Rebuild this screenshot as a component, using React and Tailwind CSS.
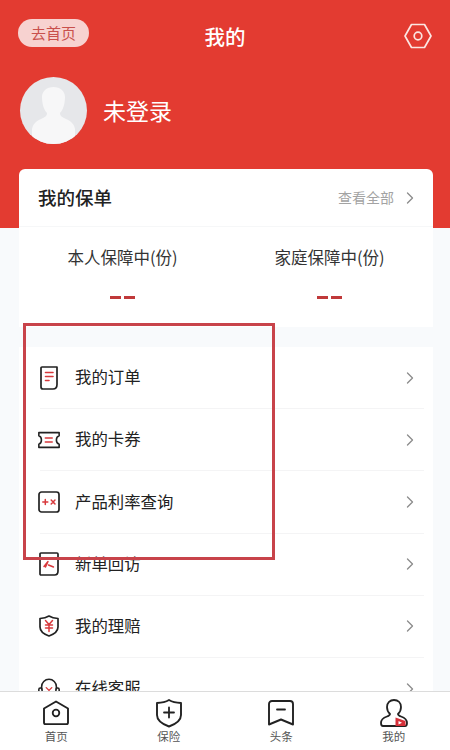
import React from 'react';
import { ChevronRight } from 'lucide-react';

const RED = '#d8393c';

// Menu icons
const OrderIcon = () => (
  <svg width="24" height="26" viewBox="0 0 24 26" fill="none" strokeLinecap="round" strokeLinejoin="round">
    <path d="M5 2h15v17.500c0 2.800-1.600 4.500-4 4.500H6c-1.200 0-2-.8-2-2V3c0-.6.400-1 1-1z" stroke="#222" strokeWidth="1.700" />
    <path d="M8.500 7.500h7.500M8.500 11.500h7.500M8.500 15.500h3.500" stroke={RED} strokeWidth="1.600" />
  </svg>
);

const TicketIcon = () => (
  <svg width="26" height="20" viewBox="0 0 26 20" fill="none" strokeLinecap="round" strokeLinejoin="round">
    <path d="M2 2h22v3.500c-2 .6-3 2.400-3 4.500s1 3.900 3 4.500V18H2v-3.500c1.800-.6 2.800-2.500 2.800-4.500S3.800 6.100 2 5.500z" stroke="#222" strokeWidth="1.700" />
    <path d="M9 7.800h7.500M9 12.200h7.500" stroke={RED} strokeWidth="1.600" />
  </svg>
);

const CalcIcon = () => (
  <svg width="24" height="24" viewBox="0 0 24 24" fill="none" strokeLinecap="round">
    <rect x="2" y="2" width="20" height="20" rx="2.500" stroke="#222" strokeWidth="1.700" />
    <path d="M5.800 12h5M8.300 9.500v5M14.200 10l3.800 4M18 10l-3.800 4" stroke={RED} strokeWidth="1.500" />
  </svg>
);

const VisitIcon = () => (
  <svg width="22" height="26" viewBox="0 0 22 26" fill="none" strokeLinecap="round" strokeLinejoin="round">
    <path d="M3 2h16c.6 0 1 .4 1 1v17c0 2.500-1.500 4-3.500 4H3c-.6 0-1-.4-1-1V3c0-.6.400-1 1-1z" stroke="#222" strokeWidth="1.700" />
    <path d="M6 15.500l4-5-2.500 5.500M10.500 14l5 2" stroke={RED} strokeWidth="1.500" />
  </svg>
);

const ClaimIcon = () => (
  <svg width="22" height="24" viewBox="0 0 22 24" fill="none" strokeLinecap="round" strokeLinejoin="round">
    <path d="M11 2c2.500 1.500 5.500 2.300 9 2.500v8.500c0 4-4 7.200-9 9-5-1.800-9-5-9-9V4.500C5.500 4.300 8.500 3.500 11 2z" stroke="#222" strokeWidth="1.700" />
    <path d="M7.500 6.500L11 10.500l3.500-4M7.500 11h7M7.500 14h7M11 10.500v7" stroke={RED} strokeWidth="1.500" />
  </svg>
);

const ServiceIcon = () => (
  <svg width="26" height="26" viewBox="0 0 26 26" fill="none" strokeLinecap="round" strokeLinejoin="round">
    <path d="M5 13V10.500C5 6 8.500 2.500 13 2.500S21 6 21 10.500V13" stroke="#222" strokeWidth="1.700" />
    <rect x="2" y="12" width="3.500" height="8" rx="1.500" stroke="#222" strokeWidth="1.700" />
    <rect x="20.500" y="12" width="3.500" height="8" rx="1.500" stroke="#222" strokeWidth="1.700" />
    <path d="M10 11.500l3 3 3-3M10 16h6M13 14.500v5" stroke={RED} strokeWidth="1.500" />
  </svg>
);

// Tab bar icons
const HomeTab = () => (
  <svg width="28" height="28" viewBox="0 0 28 28" fill="none" strokeLinejoin="round">
    <path d="M14 2.500L26 9.500v14c0 1-.6 1.600-1.500 1.600h-21C2.600 25.100 2 24.500 2 23.500v-14z" stroke="#222" strokeWidth="1.900" />
    <circle cx="14" cy="14" r="3.300" stroke="#222" strokeWidth="1.800" />
  </svg>
);

const ShieldTab = () => (
  <svg width="28" height="30" viewBox="0 0 28 30" fill="none" strokeLinecap="round" strokeLinejoin="round">
    <path d="M14 2c3 1.800 7 2.800 12 3v12c0 5-5 9-12 11.500C7 26 2 22 2 17V5c5-.2 9-1.200 12-3z" stroke="#222" strokeWidth="1.900" />
    <path d="M9 14.500h10M14 9.500v10" stroke="#222" strokeWidth="1.800" />
  </svg>
);

const BookmarkTab = () => (
  <svg width="28" height="28" viewBox="0 0 28 28" fill="none" strokeLinecap="round" strokeLinejoin="round">
    <path d="M5 2h18c1.800 0 3 1.200 3 3v20.500L14 20.500 2 25.500V5c0-1.800 1.200-3 3-3z" stroke="#222" strokeWidth="1.900" />
    <path d="M10 10.500h8" stroke="#222" strokeWidth="1.800" />
  </svg>
);

const UserTab = () => (
  <svg width="30" height="30" viewBox="0 0 30 30" fill="none" strokeLinecap="round" strokeLinejoin="round">
    <path d="M8 9c0-4.200 3-7 7-7s7 2.800 7 7c0 3-1.300 5.500-3 7 0 1 .8 1.700 3 2.500 3.500 1.200 6 3 6 6.500 0 1.500-.8 3-2 3H4c-1.200 0-2-1.500-2-3 0-3.500 2.500-5.300 6-6.500 2.200-.8 3-1.500 3-2.500-1.700-1.500-3-4-3-7z" stroke="#222" strokeWidth="1.800" />
    <path d="M16.500 19.500l10 3.500v5h-10z" fill="#d6313a" />
    <path d="M19.500 23l3.500 1.800-3.500 1.700z" fill="#fff" />
  </svg>
);

const menuItems = [
  { label: '我的订单', icon: <OrderIcon /> },
  { label: '我的卡券', icon: <TicketIcon /> },
  { label: '产品利率查询', icon: <CalcIcon /> },
  { label: '新单回访', icon: <VisitIcon /> },
  { label: '我的理赔', icon: <ClaimIcon /> },
  { label: '在线客服', icon: <ServiceIcon /> },
];

const tabs = [
  { label: '首页', icon: <HomeTab /> },
  { label: '保险', icon: <ShieldTab /> },
  { label: '头条', icon: <BookmarkTab /> },
  { label: '我的', icon: <UserTab /> },
];

const stats = ['本人保障中(份)', '家庭保障中(份)'];

const App = () => (
  <div className="relative flex flex-col h-[750px] w-[450px] overflow-hidden bg-[#f8fafc] font-['Noto_Sans_CJK_SC','Noto_Sans',sans-serif]">
    <main className="flex-1 overflow-hidden">
      {/* Red header */}
      <header className="h-[228px] bg-[#e33b31] pl-[18px] pr-[17px] pt-[19px]">
        <div className="grid grid-cols-3 items-center h-[34px]">
          <button className="self-start w-[71px] h-[28px] rounded-full bg-[#f7d2d0] text-[#c9504c] text-[15px] leading-[28px] text-center">
            去首页
          </button>
          <h1 className="text-center text-white text-[20.500px] font-medium leading-none pr-[1px]">我的</h1>
          <svg width="30" height="28" viewBox="0 0 30 28" fill="none" className="justify-self-end">
            <path d="M8.500 2.500h13L28 14l-6.500 11.500h-13L2 14z" stroke="#fbe6e2" strokeWidth="1.700" strokeLinejoin="round" />
            <circle cx="15" cy="14" r="3.800" stroke="#fbe6e2" strokeWidth="1.700" />
          </svg>
        </div>
        <div className="flex items-center gap-4 mt-[24px] pl-[2px]">
          <div className="relative w-[67px] h-[67px] rounded-full bg-[#e6e7ea] overflow-hidden">
            <svg width="67" height="67" viewBox="0 0 67 67" className="absolute inset-0">
              <path d="M22 20c0-6 5-10 11.500-10S45 14 45 20c0 7-2 13-5 16 0 3 2 4 6 6 5 2 8 5 9 10v15H12V52c1-5 4-8 9-10 4-2 6-3 6-6-3-3-5-9-5-16z" fill="#f7f7f8" />
            </svg>
          </div>
          <span className="text-white text-[23px] leading-none">未登录</span>
        </div>
      </header>

      {/* Policy card */}
      <section className="ml-[19px] mr-[17px] -mt-[59px] h-[158px] rounded-t-md bg-white">
        <div className="flex items-center justify-between h-[58px] pl-[19px] pr-[13px] border-b border-[#f6f7f8]">
          <h2 className="text-[18.500px] text-[#222] font-medium">我的保单</h2>
          <div className="flex items-center gap-[6px] text-[14px] text-[#a3a3a3]">
            <span>查看全部</span>
            <ChevronRight className="w-[20px] h-[20px] text-[#8c8c8c]" strokeWidth={1.600} />
          </div>
        </div>
        <div className="grid grid-cols-2 pt-[18px]">
          {stats.map((stat) => (
            <div key={stat} className="flex flex-col items-center">
              <span className="text-[16.500px] leading-[24px] text-[#333]">{stat}</span>
              <div className="flex gap-[3px] mt-[27px]">
                <div className="w-[11px] h-[3px] bg-[#c0393a]" />
                <div className="w-[11px] h-[3px] bg-[#c0393a]" />
              </div>
            </div>
          ))}
        </div>
      </section>

      {/* Menu list */}
      <section className="ml-[19px] mr-[17px] mt-[20px] bg-white">
        {menuItems.map((item, i) => (
          <div key={item.label} className="relative flex items-center h-[62.200px] pl-[18px] pr-[13px]">
            <div className="flex justify-center w-[24px] mb-[1px]">{item.icon}</div>
            <span className="ml-[14px] flex-1 mb-[3px] text-[16.400px] text-[#222]">{item.label}</span>
            <ChevronRight className="w-[20px] h-[20px] mb-[1px] text-[#8c8c8c]" strokeWidth={1.600} />
            {i < menuItems.length - 1 && (
              <div className="absolute bottom-0 left-[21px] right-[9px] h-px bg-[#f4f4f5]" />
            )}
          </div>
        ))}
      </section>
    </main>

    {/* Tab bar */}
    <nav className="relative z-10 grid grid-cols-4 h-[59px] bg-white border-t border-[#dcdcdc]">
      {tabs.map((tab) => (
        <div key={tab.label} className="flex flex-col items-center">
          <div className="flex items-center justify-center h-[33px] mt-[4px]">{tab.icon}</div>
          <span className="text-[11.500px] leading-[14px] text-[#555]">{tab.label}</span>
        </div>
      ))}
    </nav>

    {/* Red annotation box drawn over the screenshot */}
    <div className="absolute left-[23px] top-[323px] w-[252px] h-[237px] border-[3px] border-[#c8434a]" />
  </div>
);

export default App;
